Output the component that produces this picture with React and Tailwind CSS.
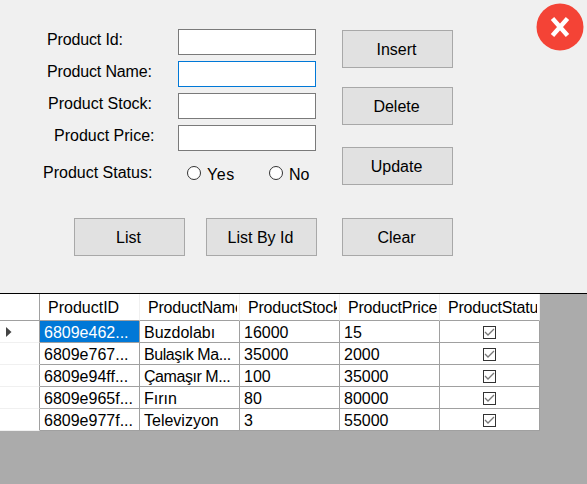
const fields = [
  { label: "Product Id:", cls: "pl-[47px] tracking-[-0.15px]" },
  { label: "Product Name:", cls: "pl-[47px] tracking-[-0.15px]", focus: true },
  { label: "Product Stock:", cls: "pl-[48px]" },
  { label: "Product Price:", cls: "pl-[54px]" },
];

const rows = [
  ["6809e462...", "Buzdolabı", "16000", "15"],
  ["6809e767...", "Bulaşık Ma...", "35000", "2000"],
  ["6809e94ff...", "Çamaşır M...", "100", "35000"],
  ["6809e965f...", "Fırın", "80", "80000"],
  ["6809e977f...", "Televizyon", "3", "55000"],
];

const headers = ["ProductID", "ProductName", "ProductStock", "ProductPrice", "ProductStatus"];

const btn = "w-[111px] h-[38px] bg-[#e1e1e1] border border-[#a8a8a8] pt-[1px] pr-[2px] text-[16px] text-black flex items-center justify-center";
const cell = "h-[22px] border-r border-b border-[#a0a0a0] px-[4px] text-[16px] leading-[23px] whitespace-nowrap overflow-hidden";

function Radio({ label, className, labelClass }) {
  return (
    <div className={"flex items-center " + className}>
      <span className="w-[14px] h-[14px] rounded-full border border-[#333333] bg-white" />
      <span className={"ml-[6px] pt-[3px] text-[16px] text-black " + labelClass}>{label}</span>
    </div>
  );
}

function CheckCell() {
  return (
    <div className="h-[22px] border-r border-b border-[#a0a0a0] pt-[1px] flex items-center justify-center">
      <svg width="13" height="13" viewBox="0 0 13 13">
        <rect x="0.5" y="0.5" width="12" height="12" fill="#fff" stroke="#333" />
        <path d="M2 6 L5 9 L11 3" fill="none" stroke="#777" strokeWidth="1.3" />
      </svg>
    </div>
  );
}

export default function App() {
  return (
    <div className="w-[587px] h-[484px] flex flex-col bg-[#ababab] overflow-hidden font-['Liberation_Sans',Arial,sans-serif]">
      <div className="relative h-[293px] shrink-0 bg-[#f0f0f0] pt-[29px]">
        <div className="flex">
          <div className="w-[342px]">
            {fields.map((f) => (
              <div key={f.label} className="flex h-[26px] mb-[6px] items-center">
                <label className={"w-[178px] pb-[5px] text-[16px] text-black " + f.cls}>{f.label}</label>
                <div className={"w-[138px] h-[26px] bg-white border " + (f.focus ? "border-[#0078d7]" : "border-[#7a7a7a]")} />
              </div>
            ))}
            <div className="flex items-center h-[20px] mt-[12px]">
              <span className="w-[187px] pl-[43px] text-[16px] text-black">Product Status:</span>
              <Radio label="Yes" className="w-[82px]" labelClass="tracking-[0.6px]" />
              <Radio label="No" className="" labelClass="" />
            </div>
          </div>
          <div className="flex flex-col pt-[1px]">
            <div className={btn}>Insert</div>
            <div className={btn + " mt-[19px]"}>Delete</div>
            <div className={btn + " mt-[22px]"}>Update</div>
          </div>
        </div>
        <div className="flex mt-[33px] pl-[74px]">
          <div className={btn}>List</div>
          <div className={btn + " ml-[21px]"}>List By Id</div>
          <div className={btn + " ml-[25px]"}>Clear</div>
        </div>
        <svg className="absolute left-[536px] top-[3px]" width="48" height="48" viewBox="0 0 48 48">
          <circle cx="24" cy="24" r="23.5" fill="#f44336" />
          <path d="M16.5 15.5 L31.5 32.5 M31.5 15.5 L16.5 32.5" stroke="#fff" strokeWidth="4.5" />
        </svg>
      </div>
      <div className="h-[1px] shrink-0 bg-black" />
      <div className="grid grid-cols-[40px_repeat(5,100px)] w-[540px] bg-white text-black">
        <div className="h-[27px] border-r border-b border-r-[#a0a0a0] border-b-[#a0a0a0]" />
        {headers.map((h) => (
          <div key={h} className="h-[27px] border-r border-b border-r-[#f0f0f0] border-b-[#a0a0a0] pl-[8px] pr-[2px]">
            <div className={"text-[16px] leading-[27px] whitespace-nowrap overflow-hidden" + (h === "ProductID" ? "" : " tracking-[-0.2px]")}>{h}</div>
          </div>
        ))}
        {rows.map((r, i) => (
          <div key={r[0]} className="contents">
            <div className="h-[22px] border-r border-b border-r-[#a0a0a0] border-b-[#f0f0f0] pt-[1px] flex items-center pl-[6px]">
              {i === 0 && (
                <svg width="6" height="10" viewBox="0 0 6 10">
                  <path d="M0 0 L5.5 5 L0 10 Z" fill="#444" />
                </svg>
              )}
            </div>
            <div className={cell + (i === 0 ? " bg-[#0078d7] text-white" : "")}>{r[0]}</div>
            <div className={cell + (r[1].endsWith("...") ? " tracking-[-0.45px]" : "")}>{r[1]}</div>
            <div className={cell}>{r[2]}</div>
            <div className={cell}>{r[3]}</div>
            <CheckCell />
          </div>
        ))}
      </div>
    </div>
  );
}
